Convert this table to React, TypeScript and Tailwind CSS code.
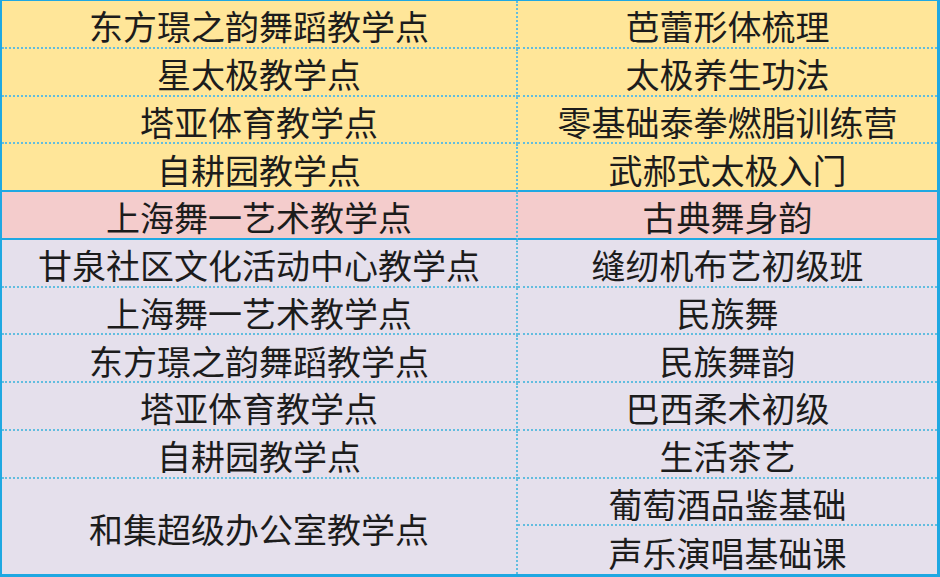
const rows: { site: string; course: string; tone: "yellow" | "pink" | "lilac" }[] = [
  { site: "东方璟之韵舞蹈教学点", course: "芭蕾形体梳理", tone: "yellow" },
  { site: "星太极教学点", course: "太极养生功法", tone: "yellow" },
  { site: "塔亚体育教学点", course: "零基础泰拳燃脂训练营", tone: "yellow" },
  { site: "自耕园教学点", course: "武郝式太极入门", tone: "yellow" },
  { site: "上海舞一艺术教学点", course: "古典舞身韵", tone: "pink" },
  { site: "甘泉社区文化活动中心教学点", course: "缝纫机布艺初级班", tone: "lilac" },
  { site: "上海舞一艺术教学点", course: "民族舞", tone: "lilac" },
  { site: "东方璟之韵舞蹈教学点", course: "民族舞韵", tone: "lilac" },
  { site: "塔亚体育教学点", course: "巴西柔术初级", tone: "lilac" },
  { site: "自耕园教学点", course: "生活茶艺", tone: "lilac" },
];

const bg = {
  yellow: "bg-[#ffe699]",
  pink: "bg-[#f4cccc]",
  lilac: "bg-[#e5e0ec]",
};

function Cell({
  text,
  className = "",
}: {
  text: string;
  className?: string;
}) {
  return (
    <div
      className={
        "flex items-center justify-center pt-[5px] text-[34px] leading-none text-[#1c1c1c] whitespace-nowrap " +
        className
      }
    >
      {text}
    </div>
  );
}

// solid rule under the 4th and 5th rows, dotted elsewhere
function rule(i: number) {
  if (i === 3 || i === 4) return "border-b-2 border-solid border-[#1fa8e2]";
  return "border-b-2 border-dotted border-[#62bddf]";
}

export default function App() {
  return (
    <div
      className="w-[940px] h-[577px] bg-white"
      style={{ fontFamily: '"Noto Sans CJK SC", "Noto Sans", sans-serif' }}
    >
      <div className="grid h-full grid-cols-[516px_1fr] grid-rows-[repeat(12,1fr)] border-t border-l-2 border-r-[3px] border-b-[3px] border-[#1fa8e2]">
        {rows.map((r, i) => (
          <div key={i} className="contents">
            <Cell
              text={r.site}
              className={`${bg[r.tone]} ${rule(i)} border-r-2 border-r-[#62bddf] [border-right-style:dotted]`}
            />
            <Cell text={r.course} className={`${bg[r.tone]} ${rule(i)}`} />
          </div>
        ))}
        <Cell
          text="和集超级办公室教学点"
          className="row-span-2 bg-[#e5e0ec] border-r-2 border-r-[#62bddf] [border-right-style:dotted]"
        />
        <Cell
          text="葡萄酒品鉴基础"
          className="bg-[#e5e0ec] border-b-2 border-dotted border-[#62bddf]"
        />
        <Cell text="声乐演唱基础课" className="bg-[#e5e0ec]" />
      </div>
    </div>
  );
}
